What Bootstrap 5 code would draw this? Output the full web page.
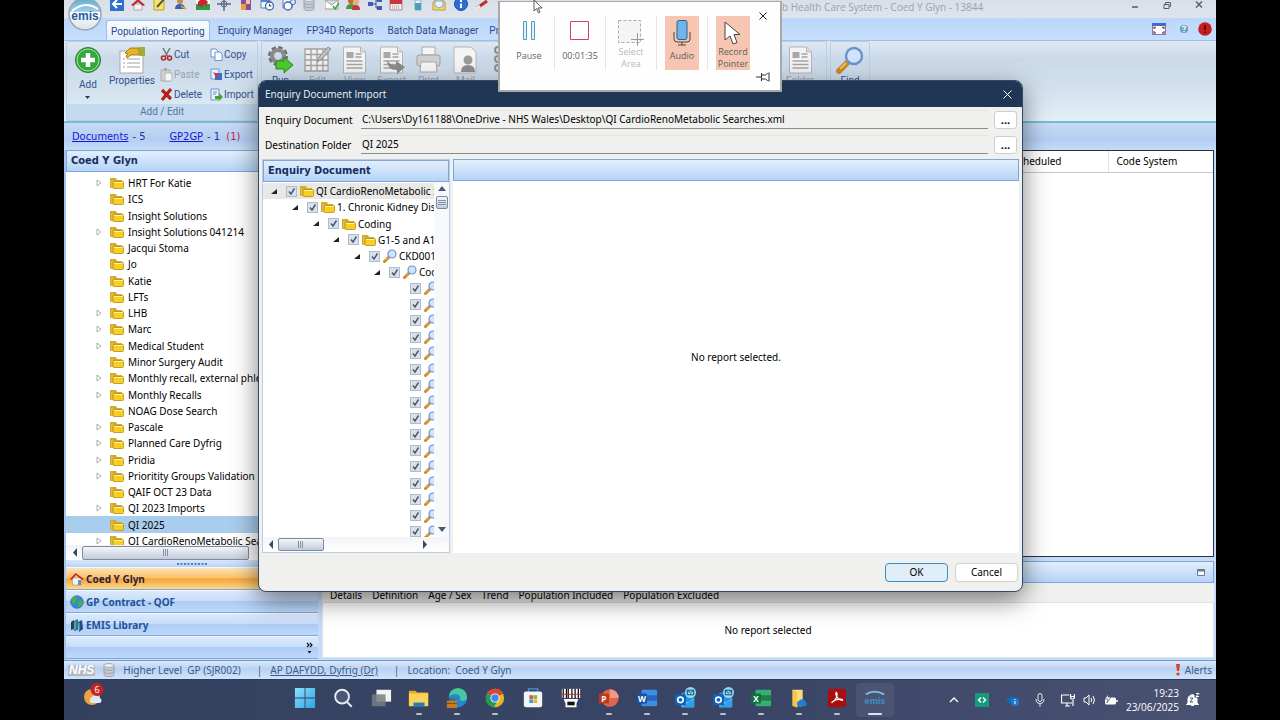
<!DOCTYPE html>
<html lang="en">
<head>
<meta charset="utf-8">
<meta name="viewport" content="width=device-width, initial-scale=1">
<title>EMIS Web Health Care System</title>
<link href="https://cdn.jsdelivr.net/npm/bootstrap@5.3.0/dist/css/bootstrap.min.css" rel="stylesheet">
<style>
:root{--ui:"Noto Sans","Open Sans",sans-serif;--head:"DejaVu Sans Condensed","Noto Sans",sans-serif;--rib:Roboto,sans-serif;--win:"Open Sans","Noto Sans",sans-serif;--edge:#7fa6d6}
html,body{height:100%}
body{background:#000;font-family:var(--ui);font-size:10px;line-height:16px;color:#000;overflow:hidden}
button,input{font:inherit;color:inherit}
svg{display:block;flex:none}
.screen{margin:0 5%;height:100%;min-height:720px}
.app{background:#c5dbf8;min-height:0}
.titlebar{height:18px;background:linear-gradient(#d9dfe9,#dfe4ec)}
.quick{width:379px;margin-left:46px;margin-top:-3px}
.apptitle{font-family:var(--win);color:#9aa2ad;font-size:10px;line-height:14px}
.ibtn{border:0;background:none;padding:0}
.tabstrip{height:22px;background:linear-gradient(#bcd7fb,#c6defc);font-family:var(--rib);font-size:10px;padding-left:42px}
.tabstrip a{color:#2b4a8b;text-decoration:none;padding:0 7px;line-height:25px;white-space:nowrap}
.tabstrip a.on{background:linear-gradient(#fafdff,#e4eefa);border:1px solid #9dbfe8;border-bottom:0;border-radius:3px 3px 0 0;padding:0 4px;margin:2px 1px 0 0;line-height:21px}
.orb{left:2px;top:-4px}
.ribbon{height:83px;gap:3px;padding:0 2px;background:linear-gradient(#dfe9f3 0,#cad9ea 22%,#d3e1ee 60%,#e2f0f7 100%);border-top:1px solid #9ec1e6;border-bottom:2px solid #7db7d8;font-family:var(--rib);font-size:10px;line-height:14px;color:#33518e}
.grp{border:1px solid #b9cfe4;border-radius:2px}
.grplabel{color:#55739f;background:#c3daf0;line-height:16px}
.gray{color:#9aa3ad}
.smalls{display:grid;grid-template-columns:50px 44px;row-gap:6px;align-content:start;margin-left:5px;padding-top:2px}
.docs{height:27px;background:linear-gradient(#c8daf4,#b3cef3 60%,#c6dbf6);font-family:var(--head);font-size:11px}
.docs a{color:#1717d6}
.docs span{color:#22339c}
.side{width:254px;background:#cfe1f8;border-left:2px solid #a3c3ea}
.phead{height:22px;background:linear-gradient(#e3effd,#b5d3f7);border:1px solid var(--edge);color:#15305f;font-family:var(--head);font-size:11px;font-weight:700;line-height:20px;padding-left:4px}
.tree{background:#fff;display:grid;grid-auto-rows:1fr;overflow:hidden;white-space:nowrap;margin-bottom:-4px;padding-top:3px}
#tree2{margin-bottom:-3px;padding-top:1px;width:171px}
.trow{display:flex;align-items:center;min-height:0}
.trow.sel{background:#a9cdec}
.tw{width:14px}
.hbar{background:linear-gradient(#f3f4f7,#fff);height:15px}
.thumb{background:linear-gradient(#f4f6fa,#c3cad9);border:1px solid #7c8aa3;border-radius:2px}
.grip{height:7px;background:linear-gradient(#d8e8fb,#b8d3f5)}
.nav3{border:0;border-bottom:1px solid var(--edge);border-top:1px solid #f0f7ff;height:23px;background:linear-gradient(#dbe9fc 0,#c9defa 45%,#aecdf5 50%,#bed8f8);font-weight:700;color:#24529a;text-align:left;padding:0 4px;gap:2px}
.nav3.hot{background:linear-gradient(#fee3b5,#fbc068 48%,#f5a438 52%,#fbd98a);color:#2a2140}
.gridbox{background:#fff;border:1px solid #26324a}
.gridbox th{font-weight:400;height:21px;border-bottom:1px solid #c8c8c8}
.statusbar{height:20px;border-top:1px solid #6f9bd0;background:linear-gradient(#dbe9fb,#b9d2f2 45%,#d3e4fa);color:#3c5a8d;border-bottom:1px solid #2a3b66}
.statusbar a{color:#3c5a8d}
.nhs{background:#b4bac2;color:#fff;font:italic 700 12px/11px "Liberation Sans",Arial,sans-serif;padding:0 1px}
.dlg{left:194px;right:193px;top:80px;background:#f0f0ee;border:1px solid #33496a;border-radius:8px;box-shadow:0 8px 26px rgba(0,0,0,.5);overflow:hidden;z-index:2}
.dlgtitle{height:26px;background:#1f3654;color:#f2f5f9;padding:0 10px 0 6px;font-family:var(--win);font-size:10px}
.frow{height:25px;padding:0 5px 0 6px}
.frow label{width:96px;flex:none;white-space:nowrap}
.frow input{background:#f0f0ee;border:0;border-bottom:1px solid #8c8c8c;border-top:1px solid #e4e4e2;height:19px;padding:0 0 2px 1px;min-width:0;outline:0}
.dots{width:23px;height:18px;background:#fff;border:1px solid #cfcfcf;border-radius:3px;line-height:14px;padding:0;font-size:11px;font-weight:700;margin-left:6px}
.pane{border:1px solid #b9cde4;background:#fff}
.chk{appearance:none;width:11px;height:11px;margin:0;border:1px solid #aebccc;flex:none;background:#d8e0ea url("data:image/svg+xml,%3Csvg xmlns='http://www.w3.org/2000/svg' viewBox='0 0 9 9'%3E%3Cpath d='M2 4.5L4 7L7.5 1.5' fill='none' stroke='%23445570' stroke-width='1.4'/%3E%3C/svg%3E")}
.okbtn,.canbtn{width:63px;height:19px;border:1px solid #d0d0d0;border-radius:4px;background:#fff;line-height:16px;padding:0}
.okbtn{background:#e0eef7;border-color:#3c8cbf}
.rec{top:1px;left:50%;width:284px;height:91px;margin-left:-142px;background:#fefefe;border:2px solid #a9a9a9;border-top-width:1px;z-index:3;color:#5e5e5e;font-size:9px;line-height:12px;font-family:var(--win)}
.rbtn{border:0;background:none;width:34px;height:54px;padding:0;color:inherit;white-space:nowrap}
.rbtn.act{background:#f6c6b2}
.sep{width:1px;height:54px;background:#e6e6e6}
.taskbar{height:40px;background:linear-gradient(90deg,#33415f,#3a4565 60%,#4a5272);color:#fff}
.tk{width:38px;height:34px;border:0;background:none;padding:0;color:#fff}
.tk.cur{background:#4b5573;border-radius:4px}
.run::after{content:"";display:block;width:6px;height:2px;border-radius:1px;background:#b9bfcd;margin:4px auto 0}
.cur.run::after{width:14px;background:#dfe3ea}
.clock{font-family:var(--win);font-size:10px;line-height:14px;text-align:right}
</style>
</head>
<body>
<svg width="0" height="0" class="position-absolute" aria-hidden="true">
<symbol id="fold" viewBox="0 0 14 12"><path d="M0 1h6l1 2h5v3H3L2 11H0z" fill="#d3ac2e"/><path d="M1 3h2v8H1z" fill="#dcbc50"/><rect x="3" y="4.500" width="10.500" height="7" rx="1" fill="#f8cf1f" stroke="#b98d10" stroke-width=".8"/><path d="M4 5.500h8.500" stroke="#fff2a0"/></symbol>
<symbol id="mag" viewBox="0 0 14 14"><path d="M1.500 12.500L6 8" stroke="#c98a2c" stroke-width="3" stroke-linecap="round"/><path d="M2 11.500L5 8.500" stroke="#f0c066" stroke-width="1"/><circle cx="9" cy="5" r="4" fill="#cfe3fb" stroke="#6b93d0" stroke-width="1.200"/></symbol>
<symbol id="twc" viewBox="0 0 6 8"><path d="M1 1l4 3-4 3z" fill="#fff" stroke="#9a9a9a" stroke-width=".8"/></symbol>
<symbol id="two" viewBox="0 0 7 7"><path d="M6 1v5H0z" fill="#222"/></symbol>
<symbol id="db" viewBox="0 0 12 14"><path d="M1 2.500v9c0 3 10 3 10 0v-9z" fill="#c8ccd2" stroke="#8b9199" stroke-width=".7"/><ellipse cx="6" cy="2.500" rx="5" ry="2" fill="#eef0f3" stroke="#8b9199" stroke-width=".7"/><path d="M1 5.500c0 2.500 10 2.500 10 0M1 8.500c0 2.500 10 2.500 10 0" fill="none" stroke="#8b9199" stroke-width=".7"/></symbol>
<symbol id="page" viewBox="0 0 26 28"><path d="M2 1h17l5 5v21H2z" fill="#f4f4f4" stroke="#b4b4b4"/><path d="M19 1v5h5" fill="#ddd" stroke="#b4b4b4"/><path d="M5 6h7v6H5z" fill="#a8a8a8"/><path d="M14 8h6M14 11h6M5 15h16M5 18.500h16M5 22h16" stroke="#a3a3a3" stroke-width="1.500"/></symbol>
<symbol id="outl" viewBox="0 0 24 24"><rect x="8" y="6" width="14" height="16" rx="1" fill="#2a8de0"/><path d="M8 12l7 5 7-5v10H8z" fill="#5cc4f5"/><path d="M8 22l14-9v8a1 1 0 0 1-1 1z" fill="#2f9fe8"/><rect x="1" y="8" width="12" height="12" rx="1" fill="#0f62b5"/><circle cx="7" cy="14" r="3" fill="none" stroke="#fff" stroke-width="1.800"/><circle cx="18" cy="6" r="6" fill="#8fdcf7"/><path d="M14.500 3.500h7v5h-7zM14.500 3.500L18 6.500l3.500-3" fill="none" stroke="#123d5c"/></symbol>
</svg>

<div class="screen d-flex flex-column">
<div class="app position-relative flex-grow-1 d-flex flex-column">
  <header class="titlebar d-flex align-items-start">
    <div class="quick d-flex justify-content-between flex-shrink-0" id="quick"></div>
    <div class="apptitle flex-grow-1">&nbsp;</div>
    <div class="apptitle" style="width:434px">b Health Care System - Coed Y Glyn - 13844</div>
  </header>
  <div class="position-absolute top-0 end-0 d-flex gap-4" style="padding-right:13px">
    <svg width="8" height="12" viewBox="0 0 8 12"><path d="M1 7h6" stroke="#555d6b" stroke-width="1.500"/></svg>
    <svg width="8" height="12" viewBox="0 0 8 12"><path d="M1 4.500h5v4H1zM2.500 4V2.500h5v4H6.500" fill="none" stroke="#555d6b"/></svg>
    <svg width="8" height="12" viewBox="0 0 8 12"><path d="M1 1.500l6 6M7 1.500l-6 6" stroke="#555d6b" stroke-width="1.400"/></svg>
  </div>

  <nav class="tabstrip d-flex">
    <a href="#" class="on">Population Reporting</a><a href="#">Enquiry Manager</a><a href="#">FP34D Reports</a><a href="#">Batch Data Manager</a><a href="#" style="padding-left:4px">Pr</a>
    <div class="ms-auto d-flex align-items-center gap-2 pe-1">
      <svg class="me-1" width="14" height="12" viewBox="0 0 14 12"><rect x=".5" y=".5" width="13" height="11" fill="#fff" stroke="#5b86c9"/><path d="M0 0h14v3H0z" fill="#3a6fd0"/><path d="M2 6V4.500h2M12 6V4.500h-2M2 8v2h2M12 8v2h-2" fill="none" stroke="#c33" stroke-width="1.300"/></svg>
      <svg width="12" height="12" viewBox="0 0 12 12"><circle cx="6" cy="6" r="5" fill="#6fa3cf" stroke="#e4eef8"/><path d="M4.500 4.500c0-2 3-2 3 0 0 1.200-1.500 1-1.500 2.500M6 8v1.200" stroke="#fff" fill="none" stroke-width="1.200"/></svg>
      <svg width="14" height="14" viewBox="0 0 14 14"><circle cx="7" cy="7" r="6.800" fill="#c81e1e"/><path d="M7 3v5M7 9.500v1.500" stroke="#4a0707" stroke-width="1.600"/></svg>
    </div>
  </nav>
  <svg class="orb position-absolute" width="38" height="38" viewBox="0 0 38 38"><defs><linearGradient id="og" x1="0" y1="0" x2="0" y2="1"><stop offset="0" stop-color="#5fa9cf"/><stop offset=".42" stop-color="#9fd0e6"/><stop offset=".44" stop-color="#fff"/><stop offset="1" stop-color="#d9e2ea"/></linearGradient></defs><circle cx="19" cy="18" r="16" fill="url(#og)" stroke="#9ba5b1" stroke-width="1.500"/><path d="M6 15Q19 4 32 13" fill="none" stroke="#fff" stroke-width="2"/><text x="19" y="24" text-anchor="middle" font-family="Liberation Sans" font-weight="700" font-size="12" fill="#1f5f9e">emis</text></svg>

  <div class="ribbon d-flex">
    <section class="grp d-flex flex-column" style="width:192px">
      <div class="d-flex flex-grow-1 pt-1">
        <button class="ibtn d-flex flex-column align-items-center" style="width:42px"><svg width="28" height="28" viewBox="0 0 28 28"><circle cx="14" cy="14" r="12.500" fill="#34a83c" stroke="#1f7d2b"/><circle cx="14" cy="14" r="11" fill="none" stroke="#a6e3a4"/><path d="M14 7v14M7 14h14" stroke="#fff" stroke-width="4.500"/></svg><span class="mt-1">Add</span><svg class="mt-1" width="6" height="4"><path d="M0 0h5l-2.500 3z" fill="#223a6b"/></svg></button>
        <button class="ibtn d-flex flex-column align-items-center" style="width:46px"><svg width="28" height="28" viewBox="0 0 28 28"><rect x="2" y="5" width="23" height="22" fill="#fff" stroke="#a9a9a9"/><path d="M5 13h2M9 13h13M5 17h2M9 17h13M5 21h2M9 21h13" stroke="#9aa2ad"/><path d="M7 7l5-5h9v7h-8l-4 3-1-2 2-2z" fill="#e9b22c" stroke="#946b12" stroke-width=".8"/><path d="M21 1h6v9h-6z" fill="#9cae38"/></svg><span>Properties</span></button>
        <div class="smalls" id="smalls"></div>
      </div>
      <div class="grplabel text-center">Add / Edit</div>
    </section>
    <section class="grp d-flex pt-1 flex-shrink-0" style="width:566px" id="big2"></section>
    <section class="grp pt-1 text-center" style="width:40px"><svg class="mx-auto" width="28" height="28" viewBox="0 0 14 14"><use href="#mag"/></svg>Find</section>
  </div>

  <div class="docs d-flex align-items-center px-2"><a href="#">Documents</a><span class="ms-1">- 5</span><a href="#" class="ms-4">GP2GP</a><span class="ms-1">- 1 &nbsp;<b class="fw-normal" style="color:#c0243c">(1)</b></span></div>

  <div class="flex-grow-1 d-flex" style="min-height:0">
    <aside class="side d-flex flex-column flex-shrink-0">
      <div class="phead">Coed Y Glyn</div>
      <div class="tree flex-grow-1" id="tree1"></div>
      <div class="hbar d-flex align-items-center flex-shrink-0 px-1"><svg width="12" height="9" viewBox="0 0 12 9"><path d="M7 0v9L3 4.500z" fill="#3b4660"/></svg><div class="thumb d-flex justify-content-center align-items-center" style="width:167px;height:14px"><svg width="8" height="7"><path d="M1.500 0v7M3.500 0v7M5.500 0v7" stroke="#8490a5"/></svg></div></div>
      <div class="grip d-flex justify-content-center align-items-center flex-shrink-0"><svg width="30" height="2"><path d="M0 1h30" stroke="#4f7dbf" stroke-width="2" stroke-dasharray="2 1.500"/></svg></div>
      <button class="nav3 hot d-flex align-items-center"><svg width="14" height="14" viewBox="0 0 14 14"><path d="M2.500 6h9v7h-9z" fill="#f3f3f3" stroke="#999" stroke-width=".6"/><path d="M0 7l5.500-6L14 7l-2 1-6-5-4.500 5z" fill="#c62828"/><path d="M8 8h3v5H8z" fill="#7c8aa8"/></svg>Coed Y Glyn</button>
      <button class="nav3 d-flex align-items-center"><svg width="14" height="14" viewBox="0 0 14 14"><circle cx="7" cy="7" r="6.300" fill="#3d86d8" stroke="#2a5ea6" stroke-width=".6"/><path d="M3 2.500c3-2 5 0 4 2S5 6 5 8s-2 1-3-1 0-4 1-4.500zM9 6c2-1 4 0 4 1s-2 5-4 5-1-5 0-6z" fill="#45b249"/></svg>GP Contract - QOF</button>
      <button class="nav3 d-flex align-items-center"><svg width="14" height="14" viewBox="0 0 14 14"><path d="M1 4l3-2v9l-3 1z" fill="#2e3f57"/><path d="M4 3l4-2v11l-4 1z" fill="#1f7f8c"/><path d="M8 4l4-2 1 9-4 3z" fill="#1d4d86"/><path d="M5 3.500v8M9 4.500v8" stroke="#a8d5e2" stroke-width=".8"/></svg>EMIS Library</button>
      <div class="nav3 d-flex justify-content-end pt-1"><svg width="8" height="14" viewBox="0 0 8 14"><path d="M1 2l2 2-2 2M4 2l2 2-2 2" fill="none" stroke="#111" stroke-width="1.200"/><path d="M1.500 10h4l-2 2.500z" fill="#111"/></svg></div>
      <div style="height:1px"></div>
    </aside>
    <main class="flex-grow-1 d-flex flex-column ps-1" style="min-width:0;padding-right:2px">
      <div class="gridbox flex-grow-1">
        <table class="w-100"><thead><tr><th style="padding-left:700px">heduled</th><th class="border-start ps-2" style="width:105px">Code System</th></tr></thead></table>
      </div>
      <div class="phead mt-1 d-flex justify-content-end align-items-center flex-shrink-0" style="padding-right:8px"><svg width="8" height="7"><path d="M.5.5h7v6h-7z" fill="#fff" stroke="#6a7a90"/><path d="M0 1.500h8" stroke="#6a7a90" stroke-width="2"/></svg></div>
      <div class="d-flex flex-shrink-0" style="height:19px;background:#f0f0ee;gap:10px;padding:4px 8px 0"><span>Details</span><span>Definition</span><span>Age / Sex</span><span>Trend</span><span>Population Included</span><span>Population Excluded</span></div>
      <div class="bg-white flex-shrink-0 text-center border" style="height:56px;line-height:54px">No report selected</div>
      <div class="flex-shrink-0" style="height:2px"></div>
    </main>
  </div>

  <footer class="statusbar d-flex align-items-center flex-shrink-0">
    <span class="nhs ms-1">NHS</span><svg class="ms-2" width="12" height="14"><use href="#db"/></svg><span class="ms-2">Higher Level&nbsp; GP (SJR002)</span><span class="ms-3">|</span><a href="#" class="ms-2">AP DAFYDD, Dyfrig (Dr)</a><span class="ms-3">|</span><span class="ms-2">Location:&nbsp; Coed Y Glyn</span>
    <svg class="ms-auto" width="6" height="14" viewBox="0 0 6 14"><path d="M1 1h4l-1 7H2z" fill="#d6402b"/><circle cx="3" cy="11" r="1.600" fill="#d6402b"/></svg><span class="ms-1 pe-1">Alerts</span>
  </footer>

  <section class="dlg position-absolute d-flex flex-column" role="dialog" aria-label="Enquiry Document Import" style="height:512px">
    <div class="dlgtitle d-flex align-items-center justify-content-between"><span>Enquiry Document Import</span><button class="ibtn" aria-label="Close"><svg width="9" height="9"><path d="M.5.5l8 8M8.500.5l-8 8" stroke="#fff"/></svg></button></div>
    <div class="frow d-flex align-items-center"><label for="f1">Enquiry Document</label><input id="f1" class="flex-grow-1" readonly value="C:\Users\Dy161188\OneDrive - NHS Wales\Desktop\QI CardioRenoMetabolic Searches.xml"><button class="dots">...</button></div>
    <div class="frow d-flex align-items-center"><label for="f2">Destination Folder</label><input id="f2" class="flex-grow-1" readonly value="QI 2025"><button class="dots">...</button></div>
    <div class="d-flex" style="height:396px;padding:2px 3px 0;gap:3px">
      <div class="pane d-flex flex-column flex-shrink-0" style="width:188px">
        <div class="phead flex-shrink-0">Enquiry Document</div>
        <div class="d-flex flex-grow-1" style="min-height:0">
          <div class="tree" id="tree2"></div>
          <div class="flex-grow-1 d-flex flex-column align-items-center bg-light py-1">
            <svg width="8" height="6"><path d="M0 5h8L4 0z" fill="#4a5878"/></svg>
            <div class="thumb mt-1 d-flex align-items-center justify-content-center" style="width:12px;height:13px"><svg width="8" height="7"><path d="M0 1.500h8M0 3.500h8M0 5.500h8" stroke="#8490a5"/></svg></div>
            <svg class="mt-auto" width="8" height="6"><path d="M0 0h8L4 5z" fill="#4a5878"/></svg>
          </div>
        </div>
        <div class="hbar d-flex align-items-center flex-shrink-0 px-1"><svg width="11" height="9"><path d="M6 0v9L2 4.500z" fill="#3b4660"/></svg><div class="thumb d-flex justify-content-center align-items-center" style="width:46px;height:13px"><svg width="8" height="7"><path d="M1.500 0v7M3.500 0v7M5.500 0v7" stroke="#8490a5"/></svg></div><svg class="ms-auto me-3" width="6" height="9"><path d="M0 0v9l4-4.500z" fill="#3b4660"/></svg></div>
      </div>
      <div class="pane flex-grow-1 d-flex flex-column border-0"><div class="phead"></div><div class="flex-grow-1 d-flex align-items-center justify-content-center" style="padding-bottom:20px">No report selected.</div></div>
    </div>
    <div class="flex-grow-1 d-flex justify-content-end align-items-center pe-1" style="gap:7px"><button class="okbtn">OK</button><button class="canbtn">Cancel</button></div>
  </section>

  <section class="rec position-absolute">
    <div class="d-flex align-items-center" style="padding:14px 0 0 12px">
      <button class="rbtn d-flex flex-column align-items-center"><svg class="my-1" width="16" height="22"><path d="M2.500 1.500h3v18h-3zM10.500 1.500h3v18h-3z" fill="#e4f3fb" stroke="#4c9ac2"/></svg><span class="mt-1">Pause</span></button>
      <i class="sep mx-2"></i>
      <button class="rbtn d-flex flex-column align-items-center"><svg class="my-1" width="20" height="22"><path d="M.5 1.500h18v18H.5z" fill="#fff" stroke="#d4405e"/></svg><span class="mt-1">00:01:35</span></button>
      <i class="sep mx-2"></i>
      <button class="rbtn d-flex flex-column align-items-center" style="color:#b8b8b8"><svg class="mt-1" width="26" height="26"><path d="M.5.500h22v22H.5z" fill="#f4f4f4" stroke="#aaa" stroke-dasharray="3 2"/><path d="M19.500 13v13M13 19.500h13" stroke="#999"/></svg><span>Select<br>Area</span></button>
      <i class="sep mx-2"></i>
      <button class="rbtn act d-flex flex-column align-items-center"><svg class="mt-1" width="18" height="26" viewBox="0 0 18 26"><rect x="4" y=".5" width="10" height="19" rx="2" fill="#6fb4ea" stroke="#2f5f8e"/><path d="M1 12v7q0 3 3 3h10q3 0 3-3v-7M9 22v3M5 25h8" fill="none" stroke="#444"/></svg><span class="mt-1">Audio</span></button>
      <i class="sep mx-2"></i>
      <button class="rbtn act d-flex flex-column align-items-center"><svg class="mt-1" width="20" height="26" viewBox="0 0 20 26"><path d="M2 2v18l5-4 3 8 4-1.500-3-8h6z" fill="#fff" stroke="#444"/></svg><span>Record<br>Pointer</span></button>
    </div>
    <button class="ibtn position-absolute" style="right:13px;top:10px" aria-label="Close"><svg width="8" height="8"><path d="M.5.500l7 7M7.500.500l-7 7" stroke="#222"/></svg></button>
    <svg class="position-absolute" style="right:9px;top:70px" width="15" height="10"><path d="M0 5h5M5.500 1v8M5.500 3h4l2-1.500h1M5.500 7h4l2 1.500h1M13 .5v9" fill="none" stroke="#333"/></svg>
    <svg class="position-absolute" style="left:33px;top:-3px" width="10" height="15" viewBox="0 0 10 15"><path d="M1 1v11l2.500-2.500 2 4.500 1.500-1-2-4h4z" fill="#fff" stroke="#333" stroke-width=".8"/></svg>
  </section>
</div>

<div class="taskbar d-flex align-items-center flex-shrink-0">
  <button class="tk d-flex justify-content-center position-relative" style="margin:0 173px 0 11px"><svg width="26" height="24" viewBox="0 0 26 24"><circle cx="11" cy="14" r="8" fill="#f0a23a"/><path d="M10 20a3.500 3.500 0 0 1 1-6 4.500 4.500 0 0 1 8 1 2.800 2.800 0 0 1 0 5z" fill="#dbe8f8"/><circle cx="16" cy="6.500" r="6.500" fill="#c02328"/><text x="16" y="10" text-anchor="middle" font-size="9" fill="#fff" font-family="Noto Sans">6</text></svg></button>
  <div class="d-flex" id="apps"></div>
  <div class="ms-auto d-flex align-items-center">
    <svg width="10" height="6" class="me-3"><path d="M1 5l4-4 4 4" fill="none" stroke="#fff" stroke-width="1.300"/></svg>
    <svg width="14" height="14" class="me-3"><path d="M0 0h14v14H0z" fill="#159a7e"/><path d="M6 4.500L3.500 7 6 9.500M8 4.500L10.500 7 8 9.500" fill="none" stroke="#fff" stroke-width="1.400"/></svg>
    <svg width="14" height="12" class="me-3"><path d="M3 9a3 3 0 0 1 0-5 4 4 0 0 1 7 1l-1 4z" fill="#1468b8"/><circle cx="10" cy="8" r="4" fill="#1d7bd4"/><path d="M10 5v1M10 7v3" stroke="#fff"/></svg>
    <svg width="10" height="14" viewBox="0 0 10 14" class="me-3"><rect x="3" y=".5" width="4" height="8" rx="2" fill="none" stroke="#e6e8ee"/><path d="M1 6q0 4.500 4 4.500T9 6M5 10.500V14" fill="none" stroke="#e6e8ee"/></svg>
    <svg width="14" height="14" viewBox="0 0 14 14" class="me-2"><path d="M8 2H.5v8H11M4 13h5M6 10v3M12 13V7M9.500 1v3q0 2 2 2t2-2V1M9.500 3.500h4" fill="none" stroke="#fff" stroke-width="1.200"/></svg>
    <svg width="13" height="12" viewBox="0 0 13 12" class="me-2"><path d="M1 4h2l3-3v10L3 8H1z" fill="none" stroke="#fff"/><path d="M8 4q1.500 2 0 4M10 2q3 4 0 8" fill="none" stroke="#fff"/></svg>
    <svg width="14" height="12" viewBox="0 0 14 12" class="me-2"><rect x="1" y="3.500" width="11" height="7" rx="1.500" fill="#fff"/><path d="M13 6v2" stroke="#fff" stroke-width="1.500"/><path d="M4 0l-3 5h3l-1 4 4-6H4z" fill="#fff" stroke="#4a5272" stroke-width=".7"/></svg>
    <div class="clock">19:23<br>23/06/2025</div>
    <svg width="14" height="14" viewBox="0 0 14 14" style="margin:0 16px 0 7px"><path d="M2 10V6a4.500 4.500 0 0 1 6-4v3h3v5l1.500 1.500h-12zM5 12.500h3" fill="#fff" stroke="#fff"/><path d="M4 5h3l-3 4h3" fill="none" stroke="#4a5272"/><path d="M10 .5h3l-3 3h3" fill="none" stroke="#fff"/></svg>
  </div>
</div>
</div>

<script src="https://cdn.jsdelivr.net/npm/bootstrap@5.3.0/dist/js/bootstrap.bundle.min.js"></script>
<script>
const $ = id => document.getElementById(id);
const svg = (w, h, body, vb) => `<svg width="${w}" height="${h}" viewBox="${vb || `0 0 ${w} ${h}`}">${body}</svg>`;

// Folder tree: a leading ">" marks a branch that can be opened
const folders = ['>HRT For Katie','ICS','Insight Solutions','>Insight Solutions 041214','Jacqui Stoma','Jo','Katie','LFTs','>LHB','>Marc','>Medical Student','Minor Surgery Audit','>Monthly recall, external phle','>Monthly Recalls','NOAG Dose Search','>Pascale','>Planned Care Dyfrig','>Pridia','>Prioritity Groups Validation','QAIF OCT 23 Data','>QI 2023 Imports','QI 2025','>QI CardioRenoMetabolic Sea'];
$('tree1').innerHTML = folders.map(f => {
  const open = f[0] === '>', name = open ? f.slice(1) : f;
  return `<div class="trow${name === 'QI 2025' ? ' sel' : ''}" style="padding-left:30px"><span class="tw">${open ? svg(6, 8, '<use href="#twc"/>') : ''}</span>${svg(14, 12, '<use href="#fold"/>')}<span class="ps-1">${name}</span></div>`;
}).join('');

// Import tree: depth, icon, label
const nodes = [[0,'fold','QI CardioRenoMetabolic S'],[1,'fold','1. Chronic Kidney Dis'],[2,'fold','Coding'],[3,'fold','G1-5 and A1'],[4,'mag','CKD001'],[5,'mag','Cod']];
for (let i = 0; i < 16; i++) nodes.push([6, 'mag', '']);
$('tree2').innerHTML = nodes.map(([d, ic, t], i) =>
  `<div class="trow" style="padding-left:${8 + d * 21 - (d > 2 ? 1 : 0) - (d > 4 ? 1 : 0)}px;${i ? '' : 'background:#e8e8e6'}"><span class="tw flex-shrink-0" style="width:15px">${d < 6 ? svg(7, 7, '<use href="#two"/>') : ''}</span><input type="checkbox" class="chk" checked aria-label="${t || 'Search'}"><span style="padding-left:3px">${ic === 'fold' ? svg(14, 12, '<use href="#fold"/>') : svg(14, 14, '<use href="#mag"/>')}</span><span style="padding-left:2px">${t}</span></div>`).join('');

// Small ribbon commands
const small = [
 ['Cut','<path d="M3 0l5 9M10 0L5 9" stroke="#777" stroke-width="1.5"/><circle cx="3.5" cy="10" r="2" fill="none" stroke="#b02a2a" stroke-width="1.600"/><circle cx="9.500" cy="10" r="2" fill="none" stroke="#b02a2a" stroke-width="1.600"/>'],
 ['Copy','<path d="M1 1h5l2 2v6H1z" fill="#fff" stroke="#6c93cf"/><path d="M5 4h5l2 2v6.500H5z" fill="#fff" stroke="#6c93cf"/>'],
 ['Paste','<path d="M1 2h9v11H1z" fill="#d0d0d0" stroke="#aaa"/><path d="M4 0h3v3H4z" fill="#aaa"/><path d="M5 5h7v8H5z" fill="#f6f6f6" stroke="#b5b5b5"/>'],
 ['Export','<path d="M1 1h8v10H1z" fill="#e8f0fb" stroke="#6c93cf"/><path d="M5 5h7v7H5z" fill="#3b6fc4"/><path d="M3 4l5 2-1 5z" fill="#d03a3a"/>'],
 ['Delete','<path d="M2 2l9 9M11 1L2 12" stroke="#b3201f" stroke-width="3.200"/>'],
 ['Import','<path d="M1 1h8v11H1z" fill="#e8f0fb" stroke="#6c93cf"/><path d="M3 4h4M3 6h3" stroke="#6c93cf"/><path d="M5 8h4V5l4 4-4 4v-2H5z" fill="#43a52b"/>']];
$('smalls').innerHTML = small.map(([t, p]) => `<button class="ibtn d-flex align-items-center${t === 'Paste' ? ' gray' : ''}">${svg(14, 14, p)}<span>${t}</span></button>`).join('');

// Large ribbon commands
const pg = '<use href="#page"/>';
const large = [
 ['Run','<circle cx="11" cy="10" r="7" fill="none" stroke="#6d6d6d" stroke-width="6" stroke-dasharray="3.500 2"/><circle cx="11" cy="10" r="6" fill="none" stroke="#8a8a8a" stroke-width="4"/><path d="M9 15h8v-4l9 8-9 8v-4H9z" fill="#4cc92c" stroke="#2c8a1d"/>'],
 ['Edit','<path d="M1 3h23v22H1zM1 8.500h23M1 14h23M1 19.500h23M7 3v22M13 3v22M19 3v22" fill="#f0f0f0" stroke="#a0a0a0" stroke-width="1.300"/><path d="M13 16l2-5 9-10 3 2-9 10z" fill="#bdbdbd" stroke="#8f8f8f"/>'],
 ['View', pg],
 ['Export', pg + '<path d="M9 14q3 6 9 5v-4l9 6-8 7v-4Q9 24 9 14z" fill="#8a8a8a"/>'],
 ['Print','<path d="M7 1h13v8H7z" fill="#f5f5f5" stroke="#a9a9a9"/><rect x="2" y="9" width="23" height="11" rx="2" fill="#cfcfcf" stroke="#9f9f9f"/><path d="M6 16h15l1 10H5z" fill="#f5f5f5" stroke="#a9a9a9"/>'],
 ['Mail','<path d="M2 1h17l5 5v21H2z" fill="#f4f4f4" stroke="#b4b4b4"/><circle cx="16" cy="14" r="4.500" fill="#9a9a9a"/><path d="M9 26q0-7 7-7t7 7z" fill="#8d8d8d"/>'],
 ['',[3,12,21].map(y => `<circle cx="9" cy="${y+1}" r="3" fill="none" stroke="#8c8c8c" stroke-width="2"/>`).join('')]];
$('big2').innerHTML = large.map(([t, p], i) => `<button class="ibtn d-flex flex-column align-items-center ${i ? 'gray' : ''}" style="width:37px">${svg(27, 28, p)}<span>${t}</span></button>`).join('') +
 `<button class="ibtn d-flex flex-column align-items-center gray ms-auto px-2 me-1">${svg(27, 28, pg)}<span>Folder</span></button>`;

// Quick access icons
const q = [
 '<rect width="14" height="14" fill="#2f6fd0"/><path d="M12 7H3M7 3L3 7l4 4" stroke="#fff" stroke-width="2" fill="none"/>',
 '<path d="M3 7h8v6H3z" fill="#f2f2f2" stroke="#aaa"/><path d="M0 8l7-6 7 6-2 1-5-4-5 4z" fill="#c22638"/>',
 '<path d="M1 2h10v11H1z" fill="#f7e463" stroke="#b8a12a"/><path d="M4 10l8-9" stroke="#555" stroke-width="2"/>',
 '<circle cx="6" cy="4" r="3" fill="#c98a4e"/><path d="M1 12q0-5 5-5t5 5z" fill="#3d5fae"/><path d="M7 9l5 3" stroke="#d9a53c" stroke-width="2"/>',
 '<path d="M0 0h14v7H0z" fill="#fff"/><path d="M0 7h14v6H0z" fill="#2c9c45"/><path d="M2 9V5l3-3h4l3 3-2 4-2-2-2 3z" fill="#cf2434"/>',
 '<path d="M7 0v14M0 7h14" stroke="#5a6a84" stroke-width="1.500"/><circle cx="7" cy="7" r="3" fill="none" stroke="#5a6a84"/>',
 '<path d="M2 1h10v12H2z" fill="#8a4ca0"/><path d="M2 7h5v6H2z" fill="#f0a030"/><path d="M7 3h4v4H7z" fill="#f3c7a0"/>',
 '<path d="M1 2h9v9H1z" fill="#eef3fb" stroke="#5c82c5"/><path d="M1 2h9v3H1z" fill="#5c82c5"/><circle cx="9.500" cy="9" r="4" fill="#fff" stroke="#3b68b8" stroke-width="1.300"/><path d="M9.500 7v2h2" stroke="#333" fill="none"/>',
 '<path d="M1 2h9v9H1z" fill="#eef3fb" stroke="#5c82c5"/><circle cx="6" cy="9" r="4" fill="#fff" stroke="#3b68b8" stroke-width="1.300"/><circle cx="11" cy="5" r="2.500" fill="#e3effc" stroke="#3b68b8"/>',
 '<use href="#db" width="12" height="14"/>',
 '<path d="M0 3h13v9H0zM0 3l6.500 5L13 3" fill="#fdfdf5" stroke="#999"/><path d="M8 9l2 3 4-6" fill="none" stroke="#3da344" stroke-width="1.500"/>',
 '<circle cx="5" cy="4" r="3" fill="#c26a2b"/><circle cx="10" cy="5" r="3" fill="#e2b27b"/><path d="M0 12q0-5 5-5t5 5z" fill="#459b3c"/><path d="M6 13q0-5 4-5t4 5z" fill="#c13c3c"/>',
 '<path d="M4 7h4M8 3v8M8 3h3M8 11h3" stroke="#32508e" fill="none"/><path d="M0 5h5v4H0zM9 1h5v4H9zM9 9h5v4H9z" fill="#3a5fb5"/>',
 '<path d="M1 2h12v11H1z" fill="#eee" stroke="#a88"/><path d="M1 2h12v5H1z" fill="#c8343f"/><path d="M3 9h8M3 11h8" stroke="#b88" stroke-dasharray="1 1"/>',
 '<path d="M4 3h6v10H4z" fill="#e6f0f5" stroke="#8ba"/><path d="M4 6h6v7H4z" fill="#4a9fc0"/><path d="M5 1h4v2H5z" fill="#ddd"/>',
 '<path d="M1 5l6-4 6 4v8H1z" fill="#f7d56b" stroke="#c79a2c"/><path d="M3 4h8v5l-4 2-4-2z" fill="#e6f2ff" stroke="#79a8d8"/>',
 '<circle cx="7" cy="7" r="6.500" fill="#2c6fd6" stroke="#1d4fa5"/><path d="M7 3v2M7 6.500V11" stroke="#fff" stroke-width="2"/>',
 '<path d="M2 11L12 4" stroke="#c22b2b" stroke-width="3"/><path d="M1 12l4-3" stroke="#e8e8e8" stroke-width="3"/>'];
$('quick').innerHTML = q.map(p => `<button class="ibtn">${svg(14, 14, p)}</button>`).join('');

// Taskbar applications: drawing, running flag
const off = (a, b, c, l) => `<rect x="6" y="3" width="17" height="18" rx="1.500" fill="${a}"/><path d="M6 9h17v6H6z" fill="${b}"/><rect x="1" y="7" width="11" height="11" rx="1" fill="${c}"/><text x="6.500" y="16" text-anchor="middle" font-size="9" font-weight="700" fill="#fff" font-family="Open Sans">${l}</text>`;
const apps = [
 ['<defs><linearGradient id="wg" x2="1" y2="1"><stop stop-color="#8fe0fb"/><stop offset="1" stop-color="#2aa5e8"/></linearGradient></defs><path d="M1 1h10.500v10.500H1zM12.500 1H23v10.500h-10.500zM1 12.500h10.500V23H1zM12.500 12.500H23V23h-10.500z" fill="url(#wg)"/>'],
 ['<circle cx="11" cy="10.500" r="7.500" fill="#4a5878" stroke="#e9ecf2" stroke-width="2"/><path d="M16.500 16.500l5 5" stroke="#e9ecf2" stroke-width="2.200"/>'],
 ['<path d="M7 3h16v13H7z" fill="#f2f2f2"/><path d="M2 8h15v13H2z" fill="#777c86" opacity=".85"/>'],
 ['<path d="M1 4h7l2 2h12v14H1z" fill="#e9aa26"/><path d="M1 7h21v14H1z" fill="#fbd25b"/><path d="M6 21v-4h12v4z" fill="#1d7bc0"/>',1],
 ['<circle cx="13" cy="12" r="10" fill="#2287d0"/><path d="M3 11a10 10 0 0 1 20 0c0 5-7 5-8 3 2-4-2-7-6-6-3 0-5 2-6 3z" fill="#43c8a0"/><path d="M1 15h11v8H1z" fill="#c27b22"/><path d="M4 15v-2h5v2M1 18h11" fill="none" stroke="#7a4a10"/>',1],
 ['<circle cx="12" cy="12" r="10" fill="#e8b820"/><path d="M12 12L3.300 7A10 10 0 0 1 20.700 7z" fill="#db4437"/><path d="M12 2a10 10 0 0 1 8.700 5H12z" fill="#db4437"/><path d="M3.300 7A10 10 0 0 0 11 22l4-8-3-2z" fill="#1f9d57"/><circle cx="12" cy="12" r="5" fill="#fff"/><circle cx="12" cy="12" r="4" fill="#4285f4"/>',1],
 ['<path d="M7 6V2h10v4" fill="none" stroke="#3a9ad6" stroke-width="1.500"/><rect x="2" y="5" width="20" height="17" rx="2" fill="#f3f5f8"/><path d="M8 9h4v4H8z" fill="#e2552b"/><path d="M12.500 9h4v4h-4z" fill="#7fb93a"/><path d="M8 13.500h4v4H8z" fill="#3b9ce0"/><path d="M12.500 13.500h4v4h-4z" fill="#f3b51e"/>'],
 ['<path d="M2 2h20v10H2z" fill="#fff"/><path d="M3.500 2v10M7 2v10M9 2v10M13 2v10M16.500 2v10M20 2v10" stroke="#111" stroke-width="1.400"/><path d="M2 8h20" stroke="#c22"/><path d="M4 13h16l-2 5v4H6v-4z" fill="#fff"/><path d="M8 16h8v4H8z" fill="#111"/>'],
 ['<circle cx="13" cy="12" r="9.500" fill="#e0664a"/><path d="M13 2.500a9.500 9.500 0 0 1 9.500 9.500H13z" fill="#f19a82"/><rect x="1" y="7" width="11" height="11" rx="1" fill="#b93a20"/><text x="6.500" y="16" text-anchor="middle" font-size="9" font-weight="700" fill="#fff" font-family="Open Sans">P</text>',1],
 [off('#3f8ee0','#2465c0','#1c4fa3','W'),1],
 ['<use href="#outl"/>',1],['<use href="#outl"/>',1],
 [off('#35b070','#1b8148','#107040','X'),1],
 ['<path d="M5 3h11v18H5z" fill="#fbdc7a"/><path d="M5 3l5 3v17l-5-3z" fill="#f3c644"/><path d="M11 21a3.500 3.500 0 0 1 1-6 4 4 0 0 1 7 1 3 3 0 0 1 0 5z" fill="#1f80d0"/>',1],
 ['<rect x="2" y="2" width="20" height="20" rx="3" fill="#a80f0f"/><path d="M6 17c6-3 7-9 5.500-11-2 0 0 8 6.500 8.500 1-2-7-2-12 2.500z" fill="none" stroke="#fff" stroke-width="1.400"/>',1],
 ['<path d="M2 8q9-6 20 0" fill="none" stroke="#79bfe6" stroke-width="2"/><text x="12" y="18" text-anchor="middle" font-size="10" font-weight="700" fill="#3f8fcb" font-family="Liberation Sans">emis</text>',1,1]];
$('apps').innerHTML = apps.map(([p, run, cur]) => `<button class="tk d-flex flex-column align-items-center pt-1${run ? ' run' : ''}${cur ? ' cur' : ''}">${svg(22, 22, p, '0 0 24 24')}</button>`).join('');
</script>
</body>
</html>
